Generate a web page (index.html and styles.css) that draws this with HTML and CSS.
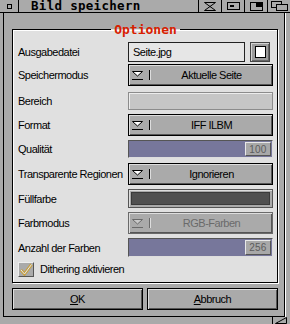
FILE: index.html
```html
<!DOCTYPE html>
<html lang="de">
  <head>
    <meta charset="UTF-8" />
    <title>Bild speichern</title>
    <link rel="stylesheet" href="styles.css">
  </head>
  <body>
    <div class="window">
      <div class="titlebar">
        <div class="close"><span class="close-box"></span></div>
        <div class="title">Bild speichern</div>
        <div class="gadget">
          <svg width="12" height="9" viewBox="0 0 12 9"><path d="M0.5 0.5H11.5L6 4.5L11.5 8.5H0.5L6 4.5Z" fill="none" stroke="#000"/></svg>
        </div>
        <div class="gadget">
          <svg width="13" height="8" viewBox="0 0 13 8"><rect x="0.5" y="0.5" width="12" height="7" fill="none" stroke="#000"/><rect x="3" y="3" width="4" height="2" fill="#000"/></svg>
        </div>
        <div class="gadget">
          <svg width="13" height="9" viewBox="0 0 13 9"><rect x="0.5" y="0.5" width="12" height="8" fill="none" stroke="#000"/><rect x="6" y="1" width="6" height="4" fill="#000"/></svg>
        </div>
        <div class="gadget">
          <svg width="17" height="10" viewBox="0 0 17 10"><rect x="0.5" y="0.5" width="10" height="6" fill="none" stroke="#000"/><rect x="5.5" y="3.5" width="11" height="6" fill="#aaa" stroke="#000"/></svg>
        </div>
      </div>

      <div class="middle">
        <div class="frame">
          <fieldset class="options">
            <legend>Optionen</legend>

            <div class="row first">
              <span class="label">Ausgabedatei</span>
              <div class="string">Seite.jpg</div>
              <button class="popup"><span class="file-icon"></span></button>
            </div>

            <div class="row gap2">
              <span class="label">Speichermodus</span>
              <div class="cycle">
                <svg class="cycle-icon" width="11" height="9" viewBox="0 0 11 9"><path d="M0.5 0.5H10.5L5.5 5Z" fill="#fff" stroke="#000"/><path d="M0 8.5H11" stroke="#000"/></svg>
                <span class="cycle-sep"></span>
                <span class="cycle-text">Aktuelle Seite</span>
              </div>
            </div>

            <div class="row gap6">
              <span class="label">Bereich</span>
              <div class="field"></div>
            </div>

            <div class="row">
              <span class="label">Format</span>
              <div class="cycle">
                <svg class="cycle-icon" width="11" height="9" viewBox="0 0 11 9"><path d="M0.5 0.5H10.5L5.5 5Z" fill="#fff" stroke="#000"/><path d="M0 8.5H11" stroke="#000"/></svg>
                <span class="cycle-sep"></span>
                <span class="cycle-text">IFF ILBM</span>
              </div>
            </div>

            <div class="row">
              <span class="label">Qualität</span>
              <div class="slider"><span class="knob">100</span></div>
            </div>

            <div class="row gap5">
              <span class="label">Transparente Regionen</span>
              <div class="cycle">
                <svg class="cycle-icon" width="11" height="9" viewBox="0 0 11 9"><path d="M0.5 0.5H10.5L5.5 5Z" fill="#fff" stroke="#000"/><path d="M0 8.5H11" stroke="#000"/></svg>
                <span class="cycle-sep"></span>
                <span class="cycle-text">Ignorieren</span>
              </div>
            </div>

            <div class="row">
              <span class="label">Füllfarbe</span>
              <div class="color"><span class="swatch"></span></div>
            </div>

            <div class="row">
              <span class="label">Farbmodus</span>
              <div class="cycle disabled">
                <svg class="cycle-icon" width="11" height="9" viewBox="0 0 11 9"><path d="M0.5 0.5H10.5L5.5 5Z" fill="#c8c8c8" stroke="#6a6a6a"/><path d="M0 8.5H11" stroke="#6a6a6a"/></svg>
                <span class="cycle-sep"></span>
                <span class="cycle-text">RGB-Farben</span>
              </div>
            </div>

            <div class="row">
              <span class="label">Anzahl der Farben</span>
              <div class="slider tall"><span class="knob">256</span></div>
            </div>

            <div class="row gap2 check">
              <span class="checkbox">
                <svg width="14" height="13" viewBox="0 0 14 13"><path d="M2 7L5.5 11L12.5 1.5" fill="none" stroke="#c9a040" stroke-width="3"/><path d="M2 7L5.5 11L12.5 1.5" fill="none" stroke="#dfe8f4" stroke-width="1"/></svg>
              </span>
              <span class="check-label">Dithering aktivieren</span>
            </div>
          </fieldset>

          <div class="buttons">
            <button class="btn"><u>O</u>K</button>
            <button class="btn"><u>A</u>bbruch</button>
          </div>
        </div>
      </div>

      <div class="bottom">
        <div class="sizer">
          <svg width="13" height="7" viewBox="0 0 13 7"><path d="M0.5 6.5L11.5 0.5V6.5Z" fill="#aaa" stroke="#000"/></svg>
        </div>
      </div>
    </div>
  </body>
</html>
```

FILE: styles.css
```css
body {
  margin: 0;
  width: 290px;
  height: 324px;
  overflow: hidden;
  background: #aaa;
  color: #000;
  font-family: "Liberation Sans", Arial, sans-serif;
  font-size: 11px;
  letter-spacing: -0.5px;
}
.window {
  height: 324px;
  display: flex;
  flex-direction: column;
}

/* title bar */
.titlebar {
  height: 12px;
  border-bottom: 1px solid #000;
  display: flex;
  flex: none;
}
.close {
  width: 18px;
  border-right: 1px solid #000;
  display: flex;
  align-items: center;
  justify-content: center;
}
.close-box {
  width: 3px;
  height: 3px;
  border: 1px solid #000;
}
.title {
  flex: 1;
  padding-left: 12px;
  font: bold 12.5px/12px "DejaVu Sans Mono", monospace;
  letter-spacing: 0.3px;
  white-space: nowrap;
}
.gadget {
  width: 22px;
  border-left: 1px solid #000;
  display: flex;
  align-items: center;
  justify-content: center;
}

/* window body */
.middle {
  flex: 1;
  display: flex;
  padding: 0 5px 0 3px;
}
.frame {
  flex: 1;
  border: 1px solid #000;
  border-top: none;
  box-shadow: 1px 0 0 #fff;
  padding: 10px 6px 0 8px;
}
.options {
  margin: 0;
  padding: 6px 4px 3px 5px;
  min-inline-size: 0;
  border: 1px solid #000;
  background: #e0e0e0;
  box-shadow: inset 1px 1px 0 #fff, 1px 1px 0 #fff;
}
.options legend {
  margin: 0 auto;
  padding: 0 3px;
  color: #d82000;
  font: bold 13px/13px "DejaVu Sans Mono", monospace;
  letter-spacing: 0;
}

.row {
  display: flex;
  align-items: center;
  margin-top: 4px;
}
.row.first {
  margin-top: 0;
}
.row.gap2 {
  margin-top: 2px;
}
.row.gap5 {
  margin-top: 5px;
}
.row.gap6 {
  margin-top: 6px;
}
.label {
  width: 110px;
  flex: none;
  white-space: nowrap;
}

.string {
  width: 111px;
  height: 18px;
  line-height: 18px;
  padding-left: 4px;
  border: 1px solid #222;
  background: #e6e6e6;
}
.popup {
  width: 20px;
  height: 20px;
  margin: 0 0 0 5px;
  padding: 0;
  border: 1px solid #444;
  background: #9c9c9c;
  box-shadow: inset 1px 1px 0 #d4d4d4, inset -1px -1px 0 #666;
  display: flex;
  align-items: center;
  justify-content: center;
}
.file-icon {
  width: 9px;
  height: 10px;
  background: #fff;
  border: 1px solid #000;
}

.cycle {
  flex: 1;
  height: 20px;
  display: flex;
  align-items: center;
  padding-left: 3px;
  border: 1px solid #000;
  background: #aaa;
  box-shadow: inset 1px 1px 0 #ddd, inset -1px -1px 0 #555;
}
.cycle-icon {
  flex: none;
}
.cycle-sep {
  width: 1px;
  height: 10px;
  margin-left: 6px;
  background: #000;
  border-right: 1px solid #ddd;
}
.cycle-text {
  flex: 1;
  text-align: center;
  white-space: nowrap;
}
.cycle.disabled {
  border-color: #6a6a6a;
  color: #6a6a6a;
}
.cycle.disabled .cycle-sep {
  background: #6a6a6a;
}

.field {
  flex: 1;
  height: 16px;
  border: 1px solid #8c8c8c;
  background: #c6c6c6;
  box-shadow: inset 1px 1px 0 #ececec;
}

.slider {
  flex: 1;
  height: 14px;
  padding: 1px;
  display: flex;
  justify-content: flex-end;
  border: 1px solid #555;
  border-right-color: #ddd;
  border-bottom-color: #ddd;
  background: #77779b;
}
.slider.tall {
  height: 15px;
}
.knob {
  width: 24px;
  border: 1px solid;
  border-color: #e8e8e8 #555 #555 #e8e8e8;
  background: #a8a8a8;
  color: #5c5c5c;
  font-size: 10px;
  letter-spacing: 0.2px;
  display: flex;
  align-items: center;
  justify-content: center;
}

.color {
  flex: 1;
  height: 13px;
  padding: 2px;
  border: 1px solid #555;
  background: #aaa;
  box-shadow: inset 1px 1px 0 #ddd;
  display: flex;
}
.swatch {
  flex: 1;
  background: #505050;
  border: 1px solid #3a3a3a;
}

.check {
  height: 20px;
}
.checkbox {
  width: 14px;
  height: 13px;
  border: 1px solid;
  border-color: #eee #555 #555 #eee;
  background: #aaa;
  display: flex;
}
.check-label {
  margin-left: 6px;
}

.buttons {
  display: flex;
  gap: 4px;
  margin-top: 5px;
}
.btn {
  flex: 1;
  height: 22px;
  margin: 0;
  padding: 0;
  border: 1px solid #000;
  background: #aaa;
  box-shadow: inset 1px 1px 0 #ddd, inset -1px -1px 0 #555;
  color: #000;
  font-family: "Liberation Sans", Arial, sans-serif;
  font-size: 11px;
  letter-spacing: -0.5px;
}

/* bottom border with size gadget */
.bottom {
  height: 7px;
  flex: none;
  display: flex;
  justify-content: flex-end;
}
.sizer {
  width: 17px;
  border-left: 1px solid #000;
  display: flex;
  align-items: center;
  justify-content: center;
}
```
